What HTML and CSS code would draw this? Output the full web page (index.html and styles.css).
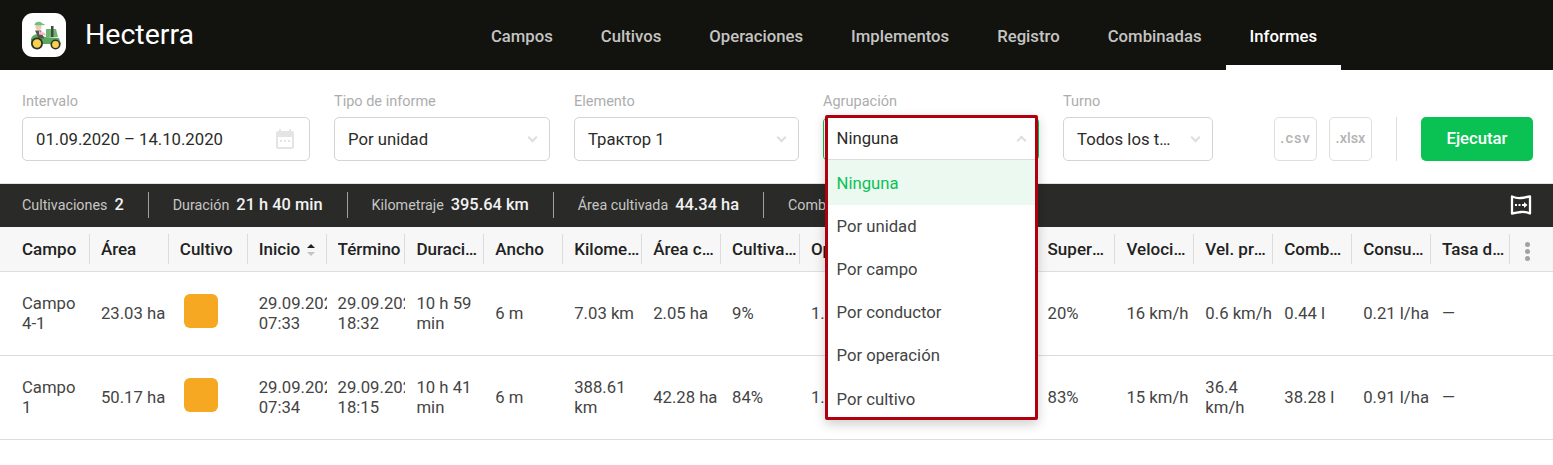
FILE: index.html
```html
<!DOCTYPE html>
<html lang="es">
<head>
  <meta charset="UTF-8" />
  <title>Hecterra – Informes</title>
  <link rel="stylesheet" href="styles.css">
</head>
<body>

  <header class="topbar">
    <div class="logo">
      <svg viewBox="0 0 44 44" width="44" height="44">
        <path d="M24 16h10l2 8H24z" fill="#6cb76f"/>
        <path d="M29 13h2.500v11H29z" fill="#3d4a3c"/>
        <path d="M9 26c1-4 5-5 8-5l6 3 14 1 2 6H9z" fill="#5aa85e"/>
        <circle cx="16.500" cy="14" r="3" fill="#f2c8ae"/>
        <path d="M12.500 12c0-3.500 6-4.500 8-1.500l3 1.200-3 .5h-8z" fill="#6fc27c"/>
        <path d="M13 17.500h6l3 8h-5.500z" fill="#55554e"/>
        <path d="M17 18l6 2 1 2.500-7-1z" fill="#f0bccb"/>
        <circle cx="15" cy="30.500" r="6" fill="#2c3326"/>
        <circle cx="15" cy="30.500" r="4.200" fill="#fbcf4f"/>
        <circle cx="33.500" cy="31.500" r="5" fill="#2c3326"/>
        <circle cx="33.500" cy="31.500" r="3.400" fill="#fbcf4f"/>
      </svg>
    </div>
    <div class="brand">Hecterra</div>
    <nav class="nav">
      <a>Campos</a>
      <a>Cultivos</a>
      <a>Operaciones</a>
      <a>Implementos</a>
      <a>Registro</a>
      <a>Combinadas</a>
      <a class="active">Informes</a>
    </nav>
  </header>

  <section class="filters">
    <div class="field w-date">
      <label>Intervalo</label>
      <div class="control">
        <span>01.09.2020 – 14.10.2020</span>
        <svg class="cal" viewBox="0 0 22 22" width="22" height="22">
          <path d="M2 5a2 2 0 0 1 2-2h1V1h2v2h8V1h2v2h1a2 2 0 0 1 2 2v14a2 2 0 0 1-2 2H4a2 2 0 0 1-2-2zm2 4v10h14V9z" fill="#e4e4e4"/>
          <path d="M6 12h2v2H6zm4 0h2v2h-2zm4 0h2v2h-2z" fill="#e4e4e4"/>
        </svg>
      </div>
    </div>
    <div class="field w-mid">
      <label>Tipo de informe</label>
      <div class="control"><span>Por unidad</span><i class="chev"></i></div>
    </div>
    <div class="field w-elem">
      <label>Elemento</label>
      <div class="control"><span>Трактор 1</span><i class="chev"></i></div>
    </div>
    <div class="field w-mid open">
      <label>Agrupación</label>
      <div class="control focus"><span>Ninguna</span></div>
      <div class="dropdown">
        <div class="dropdown-head"><span>Ninguna</span><i class="chev up"></i></div>
        <ul>
          <li class="selected">Ninguna</li>
          <li>Por unidad</li>
          <li>Por campo</li>
          <li>Por conductor</li>
          <li>Por operación</li>
          <li>Por cultivo</li>
        </ul>
      </div>
    </div>
    <div class="field w-turno">
      <label>Turno</label>
      <div class="control"><span class="trunc">Todos los turnos</span><i class="chev"></i></div>
    </div>
    <div class="exports">
      <button class="export csv">.csv</button>
      <button class="export">.xlsx</button>
    </div>
    <div class="vline"></div>
    <button class="run">Ejecutar</button>
  </section>

  <section class="summary">
    <div class="stat">Cultivaciones <b>2</b></div>
    <div class="stat">Duración <b>21 h 40 min</b></div>
    <div class="stat">Kilometraje <b>395.64 km</b></div>
    <div class="stat">Área cultivada <b>44.34 ha</b></div>
    <div class="stat">Combustible <b>38.72 l</b></div>
    <svg class="map-icon" viewBox="0 0 22 22" width="22" height="22">
      <path d="M2 2.500Q7 4.500 11 4T20 2.500V19.500Q15 17.500 11 18T2 19.500z" fill="none" stroke="#fff" stroke-width="2.300" stroke-linejoin="round"/>
      <path d="M5 10h2v2H5zm3.500 0h2v2h-2z" fill="#fff"/>
      <path d="M12 10h2V8l3.500 3-3.500 3v-2h-2z" fill="#fff"/>
    </svg>
  </section>

  <table class="report">
    <thead>
      <tr>
        <th><span>Campo</span></th>
        <th><span>Área</span></th>
        <th><span>Cultivo</span></th>
        <th><span class="sorted">Inicio <i class="sort"></i></span></th>
        <th><span>Término</span></th>
        <th><span>Duración</span></th>
        <th><span>Ancho</span></th>
        <th><span>Kilometraje</span></th>
        <th><span>Área cultivada</span></th>
        <th><span>Cultivado</span></th>
        <th><span>Operación</span></th>
        <th><span>Solape</span></th>
        <th><span>Paradas</span></th>
        <th><span>Superposición</span></th>
        <th><span>Velocidad</span></th>
        <th><span>Vel. promedio</span></th>
        <th><span>Combustible</span></th>
        <th><span>Consumo</span></th>
        <th><span>Tasa de consumo</span></th>
        <th class="more"><i class="kebab"></i></th>
      </tr>
    </thead>
    <tbody>
      <tr>
        <td>Campo 4-1</td>
        <td>23.03 ha</td>
        <td><div class="crop"></div></td>
        <td>29.09.2020 07:33</td>
        <td>29.09.2020 18:32</td>
        <td>10 h 59 min</td>
        <td>6 m</td>
        <td>7.03 km</td>
        <td>2.05 ha</td>
        <td>9%</td>
        <td>1.4 ha</td>
        <td>0.3 ha</td>
        <td>2</td>
        <td>20%</td>
        <td>16 km/h</td>
        <td>0.6 km/h</td>
        <td>0.44 l</td>
        <td>0.21 l/ha</td>
        <td>—</td>
        <td></td>
      </tr>
      <tr>
        <td>Campo 1</td>
        <td>50.17 ha</td>
        <td><div class="crop"></div></td>
        <td>29.09.2020 07:34</td>
        <td>29.09.2020 18:15</td>
        <td>10 h 41 min</td>
        <td>6 m</td>
        <td>388.61 km</td>
        <td>42.28 ha</td>
        <td>84%</td>
        <td>1.2 ha</td>
        <td>35 ha</td>
        <td>3</td>
        <td>83%</td>
        <td>15 km/h</td>
        <td>36.4 km/h</td>
        <td>38.28 l</td>
        <td>0.91 l/ha</td>
        <td>—</td>
        <td></td>
      </tr>
    </tbody>
  </table>

</body>
</html>
```

FILE: styles.css
```css
* {
  box-sizing: border-box;
  font-family: 'Roboto', sans-serif;
}

html, body {
  height: 100%;
}

body {
  margin: 0;
  background-color: #fff;
  color: #2b2b29;
  overflow: hidden;
}

/* Barre du haut */
.topbar {
  display: flex;
  align-items: center;
  height: 70px;
  padding: 0 212px 0 22px;
  background-color: #12120e;
}

.logo {
  width: 44px;
  height: 44px;
  background-color: #fff;
  border-radius: 11px;
}

.brand {
  margin: 0 0 2px 19px;
  font-size: 28.5px;
  color: #fff;
}

.nav {
  display: flex;
  align-self: stretch;
  margin-left: auto;
}

.nav a {
  display: flex;
  align-items: center;
  padding: 0 24px;
  font-size: 16.72px;
  font-weight: 500;
  color: #c4c4c2;
  border-bottom: 5px solid transparent;
  border-top: 7px solid transparent;
}

.nav a.active {
  color: #fff;
  border-bottom-color: #fff;
}

/* Filtres */
.filters {
  display: flex;
  align-items: flex-end;
  gap: 24px;
  height: 114px;
  padding: 0 20px 22px 22px;
  border-bottom: 1px solid #e2e2e2;
}

.field {
  position: relative;
  flex: none;
}

.w-date { width: 288px; }
.w-mid { width: 216px; }
.w-elem { width: 225px; }
.w-turno { width: 150px; }

.field label {
  display: block;
  margin-bottom: 7px;
  font-size: 14.5px;
  line-height: 16px;
  color: #adadad;
}

.control {
  display: flex;
  align-items: center;
  justify-content: space-between;
  height: 44px;
  padding: 0 13px;
  background-color: #fff;
  border: 1px solid #d4d4d4;
  border-radius: 5px;
  font-size: 16.7px;
}

.control.focus {
  border-color: #0ac254;
}

.trunc {
  width: 100px;
  overflow: hidden;
  white-space: nowrap;
  text-overflow: ellipsis;
}

.chev {
  flex: none;
  width: 7px;
  height: 7px;
  margin: -4px 0 0 0;
  border-right: 2px solid #dedede;
  border-bottom: 2px solid #dedede;
  transform: rotate(45deg);
}

.chev.up {
  margin: 4px 2px 0 0;
  transform: rotate(-135deg);
}

.dropdown {
  position: absolute;
  z-index: 5;
  top: 21px;
  left: 2px;
  width: 213px;
  height: 305px;
  background-color: #fff;
  border: 3px solid #b0000f;
  border-radius: 2px;
  box-shadow: 0 4px 12px rgba(0, 0, 0, 0.2);
  font-size: 16.7px;
}

.dropdown-head {
  display: flex;
  align-items: center;
  justify-content: space-between;
  height: 42px;
  padding: 0 8.5px;
  border-bottom: 1px solid #dcdcdc;
}

.dropdown ul {
  margin: 0;
  padding: 0;
  list-style: none;
}

.dropdown li {
  display: flex;
  align-items: center;
  height: 43px;
  padding: 0 8.5px;
  color: #444;
}

.dropdown li:last-child {
  padding-top: 2px;
}

.dropdown li.selected {
  height: 45px;
  padding-top: 2px;
  background-color: #ebf9f0;
  color: #0ac254;
}

.exports {
  display: flex;
  gap: 12px;
  margin-left: 37px;
}

.export {
  width: 43px;
  height: 44px;
  padding: 0 0 2px;
  background-color: #fff;
  border: 1px solid #dedede;
  border-radius: 5px;
  font-size: 14.5px;
  font-weight: 500;
  color: #b4b4b4;
}

.csv {
  letter-spacing: 1px;
}

.vline {
  width: 1px;
  height: 44px;
  background-color: #dedede;
}

.run {
  width: 112px;
  height: 44px;
  padding: 0 0 2px;
  background-color: #0ac254;
  border: none;
  border-radius: 5px;
  font-size: 16.7px;
  font-weight: 500;
  color: #fff;
}

/* Bandeau */
.summary {
  display: flex;
  align-items: center;
  height: 43px;
  padding: 0 22px 2px;
  background-color: #2a2a28;
}

.stat {
  display: flex;
  align-items: center;
  gap: 7px;
  height: 26px;
  padding-right: 24px;
  margin-right: 24px;
  border-right: 1px solid #a0a09e;
  font-size: 14.3px;
  color: #c6c6c4;
}

.stat b {
  font-size: 16.4px;
  font-weight: 500;
  color: #f2f2f2;
}

.map-icon {
  margin-left: auto;
  margin-right: -1px;
}

/* Tableau */
.report {
  width: 100%;
  table-layout: fixed;
  border-collapse: collapse;
  font-size: 16.7px;
}

.report th,
.report td {
  width: 78.9px;
  padding: 0 0 0 11px;
  text-align: left;
}

.report th {
  padding-right: 2px;
  font-size: 17px;
}

.report th:first-child,
.report td:first-child {
  width: 89.9px;
  padding-left: 22px;
  padding-right: 3px;
}

.report th:last-child,
.report td:last-child {
  width: auto;
}

.report thead tr {
  height: 44px;
  background-color: #f7f7f7;
  border-bottom: 1px solid #dedede;
}

.report th {
  position: relative;
  font-weight: 500;
  color: #222;
}

.report th span {
  display: block;
  overflow: hidden;
  white-space: nowrap;
  text-overflow: ellipsis;
}

.report th::after {
  content: "";
  position: absolute;
  top: 7px;
  right: 0;
  bottom: 7px;
  width: 1px;
  background-color: #dcdcdc;
}

.report th:last-child::after {
  display: none;
}

.report td {
  height: 84px;
  padding-top: 2px;
  overflow: hidden;
  line-height: 20px;
  color: #444;
}

.report tbody tr {
  border-bottom: 1px solid #dcdcdc;
}

.crop {
  width: 34px;
  height: 34px;
  margin: 0 0 6px 4px;
  background-color: #f7a823;
  border-radius: 6px;
}

.sort {
  display: inline-block;
  position: relative;
  width: 8px;
  height: 12px;
  margin-left: 3px;
  vertical-align: -1px;
}

.sort::before,
.sort::after {
  content: "";
  position: absolute;
  left: 0;
  border-left: 4px solid transparent;
  border-right: 4px solid transparent;
}

.sort::before {
  top: 0;
  border-bottom: 4px solid #222;
}

.sort::after {
  bottom: 0;
  border-top: 4px solid #c4c4c4;
}

.kebab {
  display: block;
  width: 5px;
  height: 5px;
  margin: -7px 0 0 4px;
  background-color: #a2a2a2;
  border-radius: 50%;
  box-shadow: 0 7px 0 #a2a2a2, 0 14px 0 #a2a2a2;
}
```
